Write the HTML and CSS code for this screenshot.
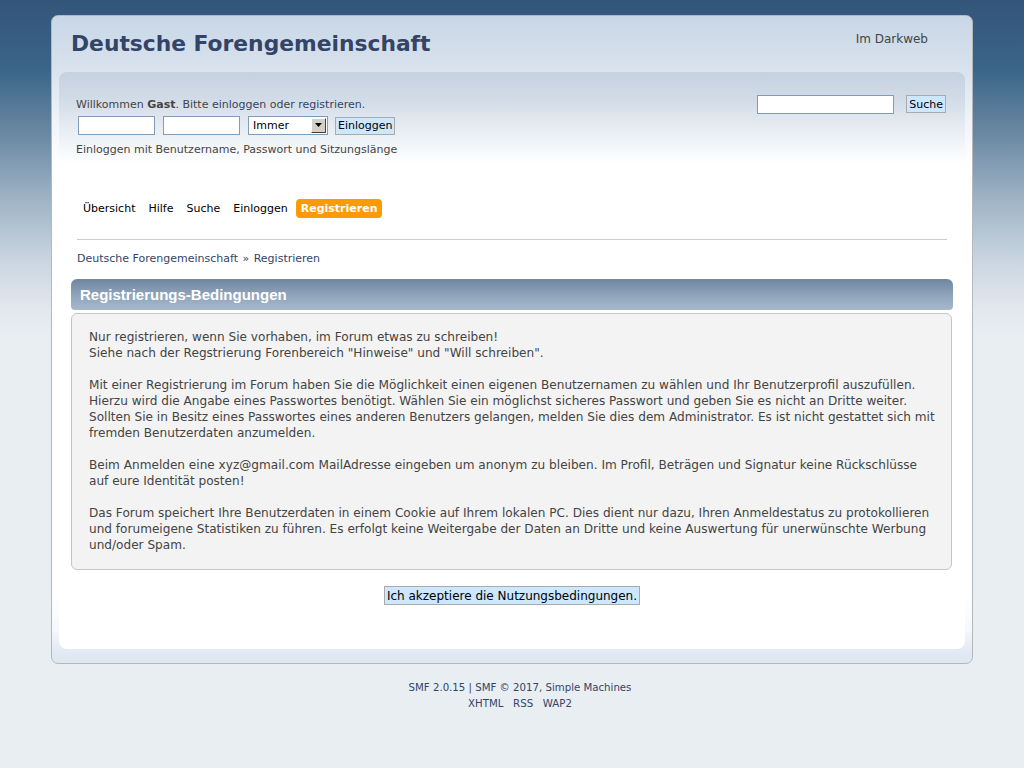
FILE: index.html
```html
<!DOCTYPE html>
<html lang="de">
<head>
<meta charset="utf-8">
<title>Registrieren</title>
<link rel="stylesheet" href="styles.css">
</head>
<body>
<div class="wrapper">
  <div class="header">
    <h1 class="forumtitle">Deutsche Forengemeinschaft</h1>
    <div class="slogan">Im Darkweb</div>
  </div>
  <div class="upper">
    <div class="userbar">
      <div class="user">
        <p class="welcome">Willkommen <strong>Gast</strong>. Bitte <a href="#">einloggen</a> oder <a href="#">registrieren</a>.</p>
        <form class="login">
          <input type="text" class="field">
          <input type="password" class="field">
          <div class="select"><span>Immer</span><span class="arrow"><svg width="9" height="5" viewBox="0 0 9 5"><path d="M1 0h7L4.5 4z" fill="#000"/></svg></span></div>
          <button type="button" class="btn">Einloggen</button>
        </form>
        <p class="hint">Einloggen mit Benutzername, Passwort und Sitzungslänge</p>
      </div>
      <form class="search">
        <input type="text" class="searchfield">
        <button type="button" class="btn">Suche</button>
      </form>
    </div>
    <ul class="menu">
      <li><a href="#">Übersicht</a></li>
      <li><a href="#">Hilfe</a></li>
      <li><a href="#">Suche</a></li>
      <li><a href="#">Einloggen</a></li>
      <li><a href="#" class="active">Registrieren</a></li>
    </ul>
    <div class="linktree"><a href="#">Deutsche Forengemeinschaft</a> <span class="sep">»</span> <a href="#">Registrieren</a></div>
    <h3 class="catbg">Registrierungs-Bedingungen</h3>
    <div class="windowbg">
      Nur registrieren, wenn Sie vorhaben, im Forum etwas zu schreiben!<br>
      Siehe nach der Regstrierung Forenbereich "Hinweise" und "Will schreiben".<br>
      <br>
      Mit einer Registrierung im Forum haben Sie die Möglichkeit einen eigenen Benutzernamen zu wählen und Ihr Benutzerprofil auszufüllen.<br>
      Hierzu wird die Angabe eines Passwortes benötigt. Wählen Sie ein möglichst sicheres Passwort und geben Sie es nicht an Dritte weiter.<br>
      Sollten Sie in Besitz eines Passwortes eines anderen Benutzers gelangen, melden Sie dies dem Administrator. Es ist nicht gestattet sich mit fremden Benutzerdaten anzumelden.<br>
      <br>
      Beim Anmelden eine xyz@gmail.com MailAdresse eingeben um anonym zu bleiben. Im Profil, Beträgen und Signatur keine Rückschlüsse auf eure Identität posten!<br>
      <br>
      Das Forum speichert Ihre Benutzerdaten in einem Cookie auf Ihrem lokalen PC. Dies dient nur dazu, Ihren Anmeldestatus zu protokollieren und forumeigene Statistiken zu führen. Es erfolgt keine Weitergabe der Daten an Dritte und keine Auswertung für unerwünschte Werbung und/oder Spam.
    </div>
    <div class="accept"><button type="button" class="btn big">Ich akzeptiere die Nutzungsbedingungen.</button></div>
  </div>
</div>
<div class="footer">
  <p><a href="#">SMF 2.0.15</a> | <a href="#">SMF © 2017</a>, <a href="#">Simple Machines</a></p>
  <p><a href="#">XHTML</a>&nbsp;&nbsp; <a href="#">RSS</a>&nbsp;&nbsp; <a href="#">WAP2</a></p>
</div>
</body>
</html>
```
FILE: styles.css
```css
html, body { margin: 0; padding: 0; }
body {
  font-family: "DejaVu Sans", Verdana, sans-serif;
  font-size: 11px;
  color: #444;
  background: #e9eef2 linear-gradient(to bottom, #33557a 0, #3b6588 70px, #6f8ca6 140px, #9fb4c6 200px, #c9d5e0 260px, #e3e8ee 310px, #e9eef2 340px) no-repeat;
  min-height: 768px;
}
a { color: #334466; text-decoration: none; }
p { margin: 0; }

.wrapper {
  width: 922px;
  box-sizing: border-box;
  margin: 15px auto 0;
  border: 1px solid #b4b8bd;
  border-radius: 7px;
  padding: 0 6px 14px;
  background: linear-gradient(to bottom, #c8d6e6 0, #dbe4ee 60px, #eef2f7 100px, #fff 150px, #fff 580px, #f4f7fb 615px, #dfe7f1 640px);
}

.header {
  display: flex;
  justify-content: space-between;
  height: 56px;
  padding: 0 38px 0 13px;
}
.forumtitle {
  margin: 13px 0 0;
  font-family: "DejaVu Sans", Verdana, sans-serif;
  font-size: 21.8px;
  font-weight: bold;
  color: #334466;
  line-height: 30px;
}
.slogan {
  margin-top: 15px;
  font-size: 12px;
  color: #444;
  line-height: 16px;
}

.upper {
  margin: 0 1px;
  border-radius: 8px;
  background: linear-gradient(to bottom, #c4d1df 0, #d3dde8 30px, #e6ecf2 55px, #fff 92px);
  padding: 26px 0 44px;
}

.userbar {
  display: flex;
  justify-content: space-between;
  padding: 0 19px 0 17px;
}
.welcome { line-height: 14px; }
.welcome strong { color: #444; }
.login {
  display: flex;
  gap: 8px;
  margin: 4px 0 0 2px;
  align-items: center;
}
.field {
  width: 77px;
  height: 19px;
  box-sizing: border-box;
  border: 1px solid #7f9db9;
  background: #fff;
  padding: 0;
  margin: 0;
}
.select {
  width: 80px;
  height: 19px;
  box-sizing: border-box;
  border: 1px solid #7f9db9;
  background: #fff;
  display: flex;
  justify-content: space-between;
  align-items: center;
  font-size: 11px;
  color: #000;
  padding: 0 1px 0 4px;
}
.arrow {
  width: 15px;
  height: 15px;
  box-sizing: border-box;
  background: #d4d0c8;
  border: 1px solid;
  border-color: #fff #404040 #404040 #fff;
  display: flex;
  align-items: center;
  justify-content: center;
}
.btn {
  font-family: "DejaVu Sans", Verdana, sans-serif;
  font-size: 11px;
  color: #000;
  background: #cde7ff;
  border: 1px solid #aaa;
  padding: 0 2px;
  height: 18px;
  line-height: 15px;
  margin: 0;
}
.login .btn { margin-left: -1px; height: 18px; }
.hint { margin-top: 8px; line-height: 14px; }

.search {
  display: flex;
  align-items: center;
  gap: 12px;
  margin-top: -4px;
  height: 20px;
}
.searchfield {
  width: 137px;
  height: 19px;
  box-sizing: border-box;
  border: 1px solid #7f9db9;
  padding: 0;
  margin: 0;
}

.menu {
  list-style: none;
  margin: 42px 0 0 19px;
  padding: 0;
  display: flex;
  gap: 3px;
}
.menu a {
  display: block;
  padding: 0 5px;
  height: 19px;
  line-height: 19px;
  color: #000;
  border-radius: 4px;
}
.menu a.active {
  background: #fe9a05;
  color: #fff;
  font-weight: bold;
}

.linktree {
  margin: 21px 18px 0 18px;
  border-top: 1px solid #ccc;
  padding-top: 12px;
  line-height: 14px;
}
.linktree .sep { color: #444; margin: 0 1px; }

.catbg {
  margin: 13px 12px 0;
  height: 31px;
  line-height: 31px;
  padding: 0 9px;
  font-family: "Liberation Sans", Arial, sans-serif;
  font-size: 15px;
  font-weight: bold;
  color: #fff;
  border-radius: 6px 6px 4px 4px;
  background: linear-gradient(to bottom, #6f869f 0, #8ea3ba 50%, #a6b8cb 100%);
}
.windowbg {
  margin: 3px 13px 0 12px;
  border: 1px solid #c6c6c6;
  border-radius: 6px;
  background: #f3f3f3;
  padding: 15px 12px 16px 17px;
  font-size: 12.1px;
  line-height: 16px;
  color: #444;
}
.accept {
  text-align: center;
  margin-top: 16px;
}
.btn.big {
  font-size: 12px;
  height: 19px;
  padding: 0 2px;
  line-height: 16px;
}

.footer {
  text-align: center;
  padding: 16px 0 0 16px;
  line-height: 16px;
  font-size: 10.2px;
}
```
